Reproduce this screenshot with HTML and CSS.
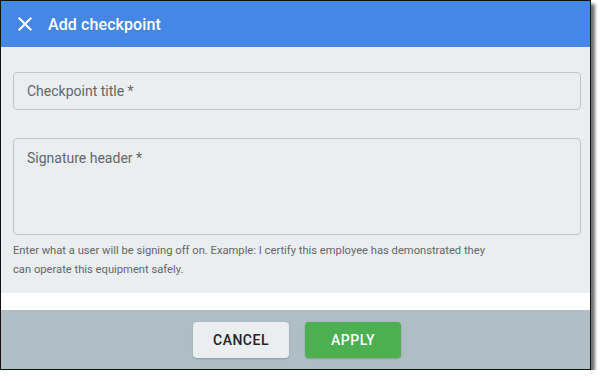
FILE: index.html
```html
<!DOCTYPE html>
<html lang="en">
<head>
    <meta charset="UTF-8">
    <meta name="viewport" content="width=device-width, initial-scale=1.0">
    <title>Add checkpoint</title>
    <link rel="stylesheet" href="styles.css">
</head>
<body>
    <div class="dialog">
        <div class="dialog-header">
            <svg class="close-icon" width="24" height="24" viewBox="0 0 24 24">
                <path d="M19 6.41L17.59 5 12 10.59 6.41 5 5 6.41 10.59 12 5 17.59 6.41 19 12 13.41 17.59 19 19 17.59 13.41 12z" fill="#fff"/>
            </svg>
            <h1>Add checkpoint</h1>
        </div>

        <div class="dialog-body">
            <div class="field field-input">Checkpoint title *</div>
            <div class="field field-area">Signature header *</div>
            <p class="hint">Enter what a user will be signing off on. Example: I certify this employee has demonstrated they can operate this equipment safely.</p>
        </div>

        <div class="spacer"></div>

        <div class="dialog-footer">
            <a href="#" class="button button-cancel">Cancel</a>
            <a href="#" class="button button-apply">Apply</a>
        </div>
    </div>
</body>
</html>
```

FILE: styles.css
```css
body {
    margin: 0;
    padding: 0;
    background: #fff;
    font-family: Roboto, "Liberation Sans", Arial, sans-serif;
}

.dialog {
    width: 589px;
    border: 1px solid #111;
    box-shadow: 4px 4px 3px rgba(0, 0, 0, 0.55);
    display: flex;
    flex-direction: column;
}

.dialog-header {
    height: 46px;
    background: #4687e5;
    display: flex;
    align-items: center;
    padding-left: 12px;
    gap: 11px;
}

.close-icon {
    width: 24px;
    height: 24px;
}

h1 {
    margin: 0;
    font-size: 16px;
    font-weight: 500;
    color: #fff;
    letter-spacing: 0.1px;
}

.dialog-body {
    background: #eaeef1;
    padding: 25px 9px 0 12px;
    height: 221px;
}

.field {
    border: 1px solid #c2c6c9;
    border-radius: 4px;
    color: #666;
    font-size: 14px;
    padding-left: 13px;
    box-sizing: border-box;
}

.field-input {
    height: 38px;
    line-height: 36px;
}

.field-area {
    height: 97px;
    margin-top: 28px;
    padding-top: 9px;
    line-height: 20px;
}

.hint {
    margin: 6px 0 0;
    max-width: 490px;
    font-size: 11.2px;
    line-height: 19px;
    color: #666;
}

.spacer {
    height: 17px;
    background: #fff;
}

.dialog-footer {
    height: 59px;
    background: #afbec5;
    display: flex;
    align-items: center;
    justify-content: center;
    gap: 16px;
    padding-left: 3px;
}

.button {
    width: 96px;
    height: 36px;
    border-radius: 4px;
    display: flex;
    align-items: center;
    justify-content: center;
    font-size: 14px;
    font-weight: 500;
    letter-spacing: 0.5px;
    text-transform: uppercase;
    text-decoration: none;
    box-shadow: 0 1px 2px rgba(0, 0, 0, 0.2);
}

.button-cancel {
    background: #eaeef1;
    color: #222;
}

.button-apply {
    background: #4caf50;
    color: #fff;
}
```
